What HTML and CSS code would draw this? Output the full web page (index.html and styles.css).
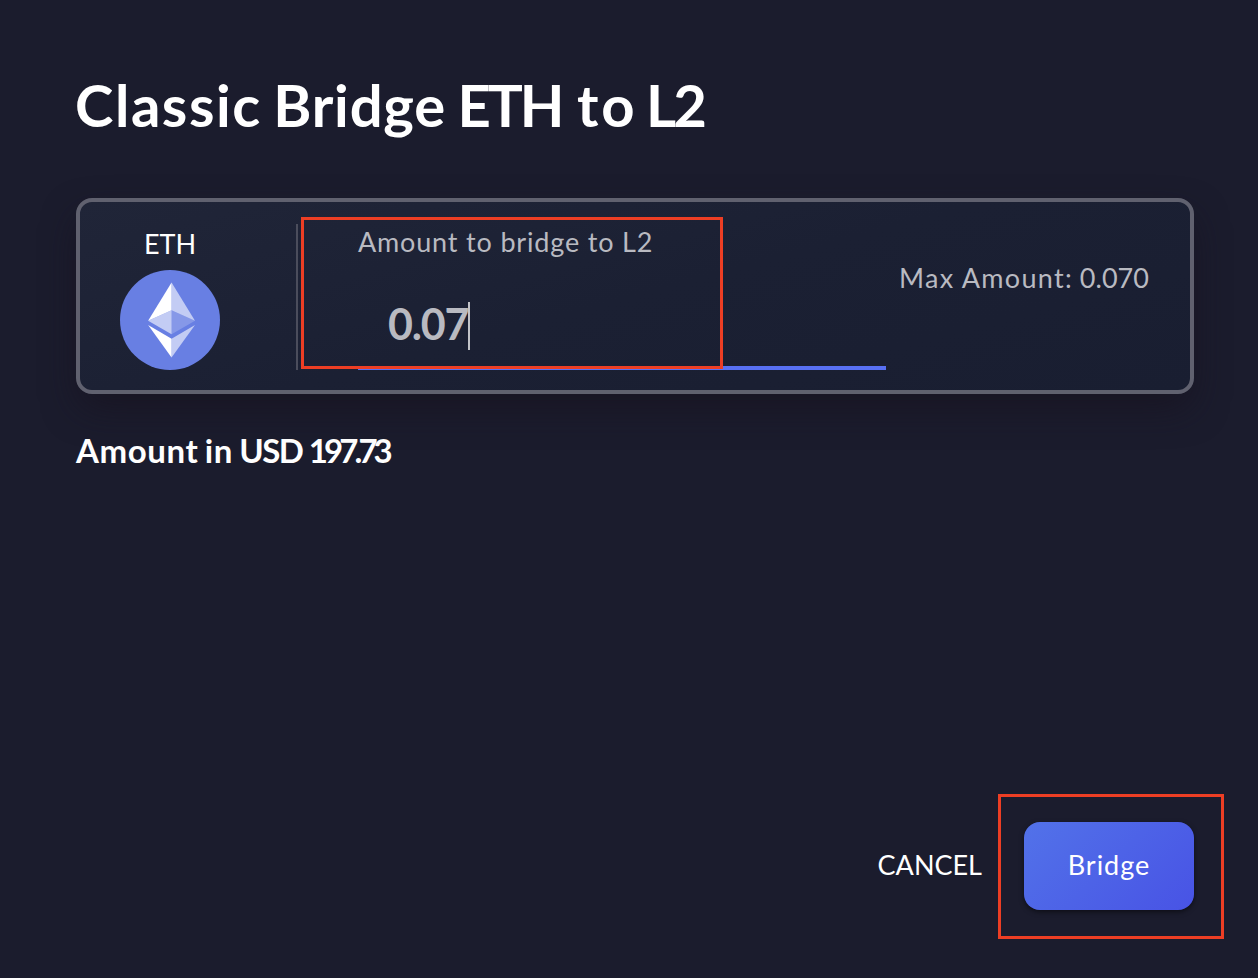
FILE: index.html
```html
<!DOCTYPE html>
<html lang="en">
<head>
<meta charset="utf-8">
<title>Classic Bridge</title>
<link rel="stylesheet" href="styles.css">
</head>
<body>
<main class="page">
  <h1 class="title"><span class="title-classic">Classic</span> Bridge <span class="title-eth">ETH</span> <span class="title-to">to</span> <span class="title-layer">L2</span></h1>
  <section class="card">
    <div class="token">
      <span class="token-name">ETH</span>
      <svg class="token-icon" viewBox="0 0 32 32" aria-hidden="true">
        <circle cx="16" cy="16" r="16" fill="#687fe3"/>
        <g fill="#fff">
          <path fill-opacity=".602" d="M16.498 4v8.87l7.497 3.35z"/>
          <path d="M16.498 4L9 16.22l7.498-3.35z"/>
          <path fill-opacity=".602" d="M16.498 21.968v6.027L24 17.616z"/>
          <path d="M16.498 27.995v-6.028L9 17.616z"/>
          <path fill-opacity=".2" d="M16.498 20.573l7.497-4.353-7.497-3.348z"/>
          <path fill-opacity=".602" d="M9 16.22l7.498 4.353v-7.701z"/>
        </g>
      </svg>
    </div>
    <div class="divider"></div>
    <div class="field">
      <span class="label">Amount to bridge to L2</span>
      <div class="input"><span class="value">0.07</span><i class="caret"></i></div>
    </div>
    <span class="max"><span class="max-label">Max Amount:</span> 0.070</span>
    <div class="mark mark-amount"></div>
  </section>
  <p class="usd">Amount in <span class="usd-code">USD</span> <span class="usd-value">197.73</span></p>
  <footer class="actions">
    <span class="cancel">CANCEL</span>
    <div class="submit">
      <div class="button"><span>Bridge</span></div>
      <div class="mark mark-submit"></div>
    </div>
  </footer>
</main>
</body>
</html>
```
FILE: styles.css
```css
* { box-sizing: border-box; }
body { margin: 0; background: #1b1c2d; color: #fff; font: 27px/32px Lato, "Open Sans", sans-serif; }
.page { height: 978px; padding: 70px 64px 68px 76px; display: flex; flex-direction: column; white-space: nowrap; overflow: hidden; }
.title { margin: 0 0 0 -1px; font-size: 58px; line-height: 70px; font-weight: 700; letter-spacing: .8px; word-spacing: -3.4px; }
.title-classic { letter-spacing: 1.55px; }
.title-eth { letter-spacing: -3px; margin-right: 4px; }
.title-to { letter-spacing: 3px; margin-right: -3px; }
.title-layer { letter-spacing: -3px; }
.card { position: relative; width: 1118px; height: 196px; margin-top: 58px; border: 4px solid #60616f; border-radius: 16px; display: flex; background: linear-gradient(165deg, #202538 0%, #1b2033 50%, #191e31 100%); box-shadow: 0 16px 36px -4px rgba(23, 17, 29, .65); }
.token { width: 100px; margin: 26px 0 0 40px; display: flex; flex-direction: column; align-items: center; }
.token-name { height: 42px; }
.token-icon { width: 100px; height: 100px; }
.divider { width: 2px; height: 146px; margin: 22px 0 0 76px; background: #4b4d5c; }
.field { width: 528px; height: 168px; margin-left: 60px; padding-top: 24px; border-bottom: 4px solid #5870f3; color: #b9bac1; display: flex; flex-direction: column; }
.label { letter-spacing: .83px; }
.input { display: flex; align-items: center; height: 48px; margin: 44px 0 0 30px; }
.value { font-size: 43px; line-height: 44px; padding-bottom: 4px; font-weight: 700; letter-spacing: -1.2px; }
.caret { width: 2px; height: 48px; background: #c2c3c8; }
.max { margin: 60px 0 0 13px; color: #b9bac1; }
.max-label { letter-spacing: 1.3px; }
.usd { margin: 36px 0 0; font-size: 33px; line-height: 40px; font-weight: 700; letter-spacing: .6px; word-spacing: -2.3px; }
.usd-code { letter-spacing: -1.5px; }
.usd-value { letter-spacing: -3.9px; }
.actions { margin-top: auto; width: 1118px; display: flex; justify-content: flex-end; align-items: center; gap: 42px; }
.cancel { padding-bottom: 2px; }
.submit { position: relative; }
.button { width: 170px; height: 88px; border-radius: 16px; display: flex; align-items: center; justify-content: center; padding-bottom: 2px; letter-spacing: 1px; background: linear-gradient(135deg, #5272e9, #4853e5); box-shadow: 0 2px 5px rgba(0, 0, 0, .5); }
.mark { position: absolute; border: 3px solid #ed3e24; }
.mark-amount { left: 221px; top: 15px; width: 422px; height: 152px; }
.mark-submit { left: -26px; top: -28px; width: 226px; height: 145px; }
```
